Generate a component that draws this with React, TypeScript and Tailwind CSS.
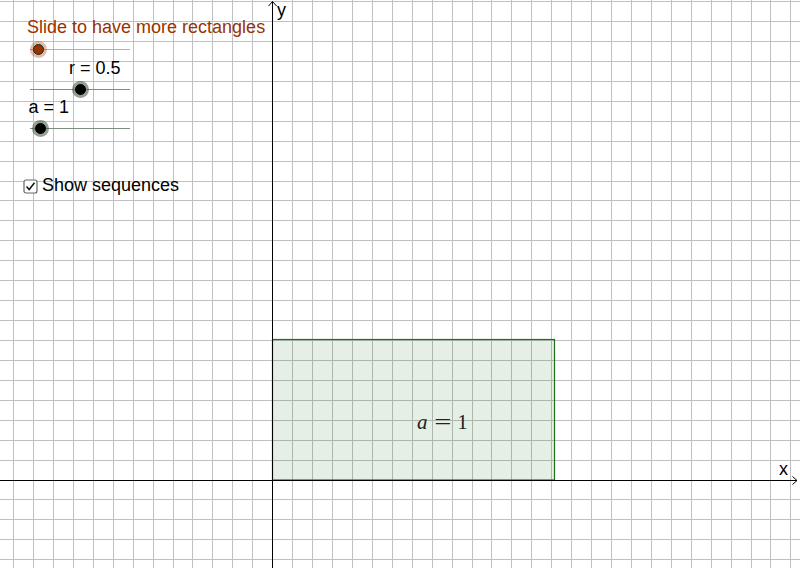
import React from "react";

const STEP = 19.93;
const AX = 272.7;
const AY = 480;

function Grid() {
  const vs: number[] = [];
  for (let k = -14; k <= 27; k++) {
    if (k === 0) continue;
    const x = AX + k * STEP;
    if (x < 0 || x > 800) continue;
    vs.push(Math.floor(x) + 0.5);
  }
  const hs: number[] = [];
  for (let k = -25; k <= 5; k++) {
    if (k === 0) continue;
    const y = AY + k * STEP;
    if (y < 0 || y > 568) continue;
    hs.push(Math.floor(y) + 0.5);
  }
  return (
    <svg className="absolute inset-0" width="800" height="568" viewBox="0 0 800 568">
      {vs.map((x) => (
        <line key={"v" + x} x1={x} y1={0} x2={x} y2={568} stroke="#c0c0c0" strokeWidth={1} />
      ))}
      {hs.map((y) => (
        <line key={"h" + y} x1={0} y1={y} x2={800} y2={y} stroke="#c0c0c0" strokeWidth={1} />
      ))}
      <rect x={272.5} y={339.5} width={282} height={140.5} fill="rgba(0,100,0,0.1)" stroke="#1f6f1f" strokeWidth={1.2} />
      <line x1={272.5} y1={1.5} x2={272.5} y2={568} stroke="#000" strokeWidth={1} />
      <polyline points="268.5,6 272.5,1.5 276.5,6" fill="none" stroke="#000" strokeWidth={1} />
      <line x1={0} y1={480.5} x2={797} y2={480.5} stroke="#000" strokeWidth={1} />
      <polyline points="792.5,476.5 797,480.5 792.5,484.5" fill="none" stroke="#000" strokeWidth={1} />
    </svg>
  );
}

type SliderProps = {
  value: number; // 0..1 position along the 100px track
  brown?: boolean;
  className?: string;
};

function Slider({ value, brown, className }: SliderProps) {
  return (
    <div className={"relative w-[100px] h-[18px] ml-[7px] flex items-center " + (className ?? "")}>
      <div className={brown ? "w-full h-px bg-[#d7a38c]" : "w-full h-px bg-[#7f8c7f]"} />
      <div
        className={
          brown
            ? "absolute top-[0.5px] w-[17px] h-[17px] rounded-full bg-[rgba(153,51,0,0.32)] flex items-center justify-center"
            : "absolute top-[0.5px] w-[17px] h-[17px] rounded-full bg-[rgba(60,80,60,0.55)] flex items-center justify-center"
        }
        style={{ left: value * 100 - 8.5 }}
      >
        <div
          className={
            brown
              ? "w-[11px] h-[11px] rounded-full bg-[#993300] border border-[#1a2a1a]"
              : "w-[11px] h-[11px] rounded-full bg-black border border-black"
          }
        />
      </div>
    </div>
  );
}

export default function App() {
  return (
    <div className="relative w-[800px] h-[568px] bg-white overflow-hidden font-['Liberation_Sans',Arial,sans-serif] text-[18px] leading-none text-black">
      <Grid />

      <div className="absolute left-[23px] top-[18px] flex flex-col items-start">
        <div className="ml-[4px] text-[#993300] whitespace-nowrap">Slide to have more rectangles</div>
        <Slider value={0.08} brown className="mt-[4px]" />

        <div className="ml-[46px] mt-[0.5px] whitespace-nowrap">r = 0.5</div>
        <Slider value={0.505} className="mt-[3.5px]" />

        <div className="ml-[5.5px] whitespace-nowrap">a = 1</div>
        <Slider value={0.105} className="mt-[3.5px]" />

        <div className="mt-[38px] flex items-center gap-[4px]">
          <svg width="15" height="15" viewBox="0 0 15 15" className="mt-[3px]">
            <rect x="1" y="1" width="13" height="13" rx="2" fill="#fff" stroke="#5f6b5f" strokeWidth="1.2" />
            <polyline points="3.5,7.5 6.2,10.5 11.5,3.8" fill="none" stroke="#111" strokeWidth="1.5" />
          </svg>
          <span className="whitespace-nowrap">Show sequences</span>
        </div>
      </div>

      <div className="absolute left-[277px] top-[1px]">y</div>
      <div className="absolute left-[779px] top-[460px]">x</div>

      <div className="absolute left-[417px] top-[412px] flex items-baseline font-['Liberation_Serif','Times_New_Roman',serif] text-[21px] leading-none text-[#222]">
        <span className="italic">a</span>
        <span className="ml-[9px] inline-block scale-x-[1.45]">=</span>
        <span className="ml-[9px]">1</span>
      </div>
    </div>
  );
}
